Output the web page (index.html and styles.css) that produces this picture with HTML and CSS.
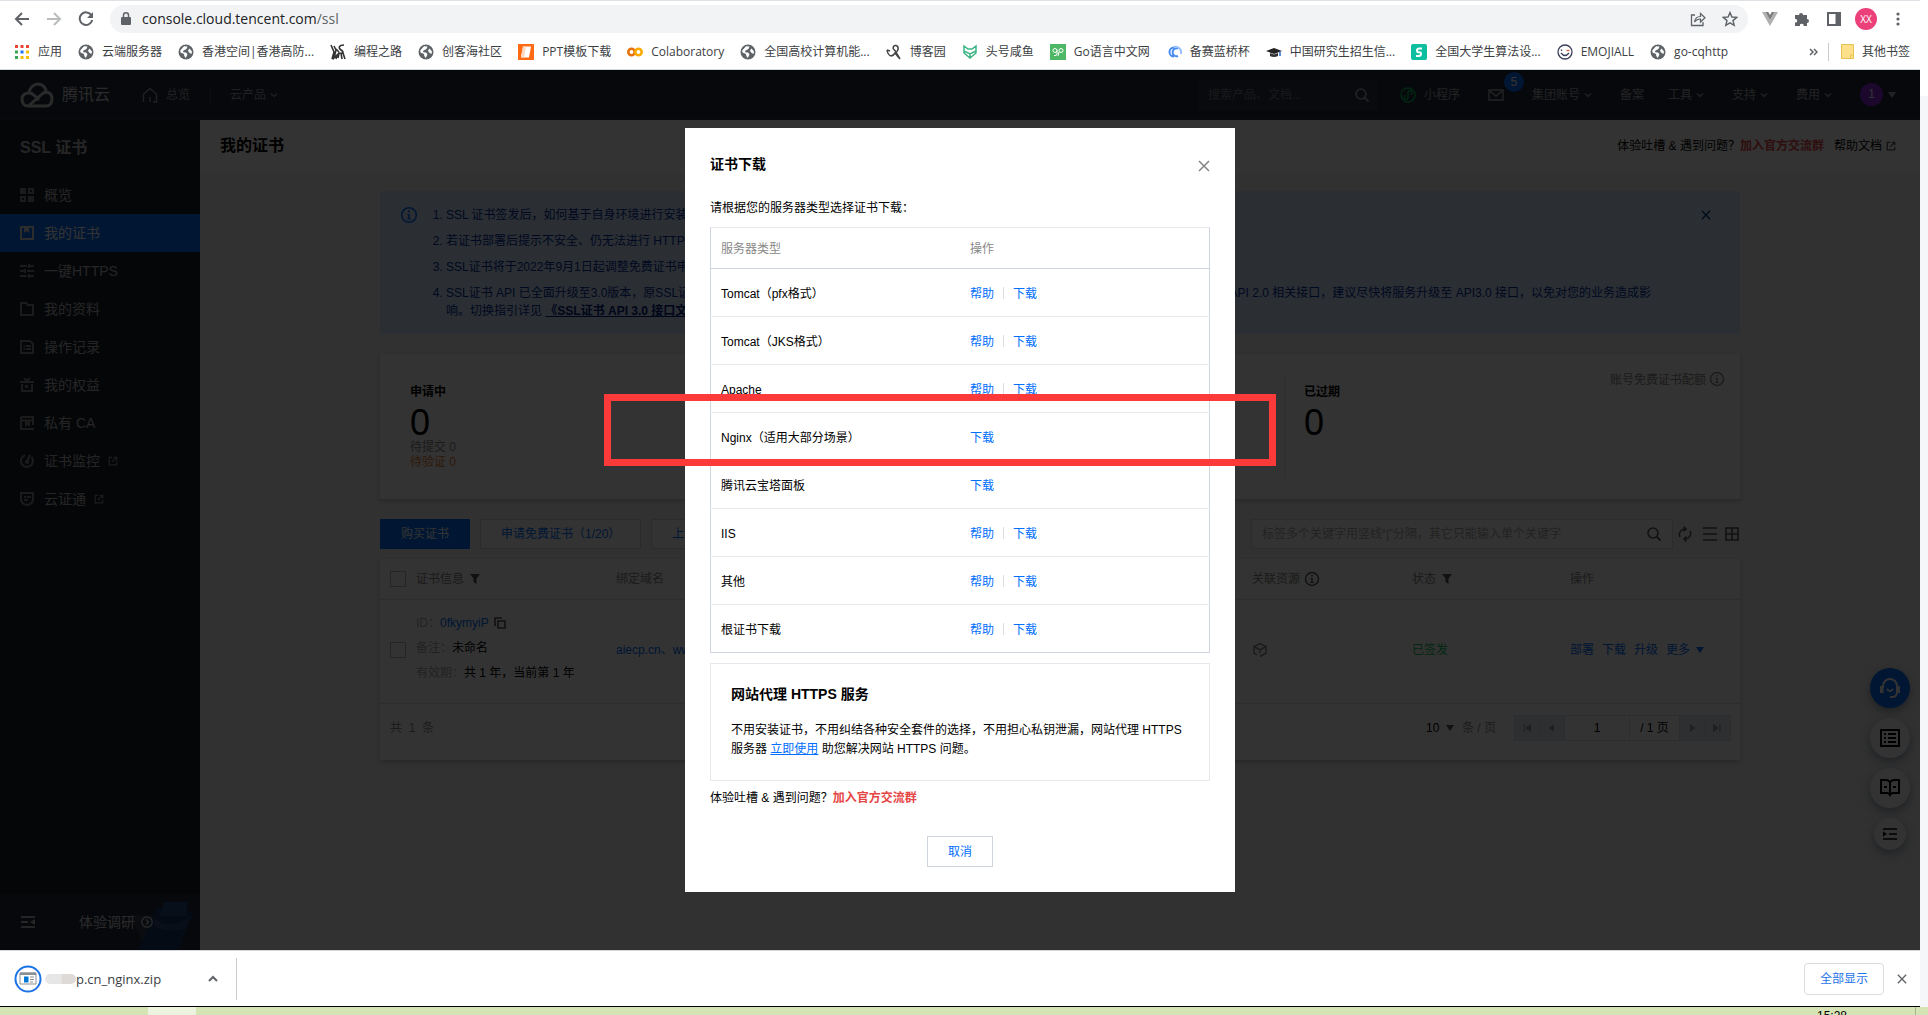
FILE: index.html
```html
<!DOCTYPE html>
<html lang="zh-CN">
<head>
<meta charset="utf-8">
<title>我的证书 - SSL 证书</title>
<link rel="stylesheet" href="styles.css">
</head>
<body>
<svg class="sprite" aria-hidden="true">
  <symbol id="globe" viewBox="0 0 16 16"><circle cx="8" cy="8" r="7.5" fill="#5f6368"/><path d="M6 2.2 9.500 2.400 8.500 5 5.500 6.500 5 8.200 8 8.600 9.500 10.300 7.800 14 6.300 12 6 10 2.500 8.500 2.200 6.500z" fill="#fff"/><path d="M11.500 4.500 14 7.500 13.500 10 11 8.500 10 6.500z" fill="#fff"/></symbol>
  <symbol id="chev" viewBox="0 0 8 8"><path d="M1 2.500 4 5.500 7 2.500" fill="none" stroke="currentColor" stroke-width="1.200"/></symbol>
  <symbol id="ext" viewBox="0 0 12 12"><path d="M5 1.500H1.500V10.500H10.500V7M7 1.500H10.500V5M10.500 1.500 5 7" fill="none" stroke="currentColor" stroke-width="1.500"/></symbol>
  <symbol id="info" viewBox="0 0 16 16"><circle cx="8" cy="8" r="6.500" fill="none" stroke="currentColor" stroke-width="1.400"/><path d="M7.200 4h1.600v1.600H7.200zM6.500 7h2.200v4h1v1H6.300v-1h1V8h-.8z" fill="currentColor"/></symbol>
  <symbol id="search" viewBox="0 0 16 16"><circle cx="7" cy="7" r="5" fill="none" stroke="currentColor" stroke-width="1.600"/><path d="M10.700 10.700 14.500 14.500" stroke="currentColor" stroke-width="1.800"/></symbol>
  <symbol id="filter" viewBox="0 0 10 10"><path d="M0 0H10L6.500 4.500V10L3.500 8V4.500z" fill="currentColor"/></symbol>
  <symbol id="close" viewBox="0 0 12 12"><path d="M1 1 11 11M11 1 1 11" stroke="currentColor" stroke-width="1.600"/></symbol>
  <symbol id="caret" viewBox="0 0 8 6"><path d="M0 0H8L4 6z" fill="currentColor"/></symbol>
</svg>

<div class="screen">
  <div class="browser">
    <header class="toolbar">
      <button class="tool" aria-label="后退"><svg width="16" height="16" viewBox="0 0 16 16"><path d="M15 8H2.500M8 2 2 8l6 6" fill="none" stroke="#5f6368" stroke-width="2"/></svg></button>
      <button class="tool" aria-label="前进"><svg width="16" height="16" viewBox="0 0 16 16"><path d="M1 8H13.500M8 2l6 6-6 6" fill="none" stroke="#babcbe" stroke-width="2"/></svg></button>
      <button class="tool" aria-label="刷新"><svg width="16" height="16" viewBox="0 0 16 16"><path d="M13.500 4.500A6.300 6.300 0 1 0 14.200 9" fill="none" stroke="#5f6368" stroke-width="2"/><path d="M15 1V7H9z" fill="#5f6368"/></svg></button>
      <div class="omnibox">
        <svg width="10" height="13" viewBox="0 0 10 13"><rect y="5" width="10" height="8" rx="1" fill="#5f6368"/><path d="M2.500 5V3.300a2.500 2.500 0 0 1 5 0V5" fill="none" stroke="#5f6368" stroke-width="1.500"/></svg>
        <span class="url">console.cloud.tencent.com<span class="path">/ssl</span></span>
        <svg width="16" height="16" viewBox="0 0 16 16"><path d="M5 4H1.500V14.500H13V11" fill="none" stroke="#5f6368" stroke-width="1.300"/><path d="M4.500 11C5 7.500 7 5.500 10.500 5.500V2.500L15 6.700 10.500 11V8C8 8 6 9 4.500 11z" fill="none" stroke="#5f6368" stroke-width="1.200"/></svg>
        <svg width="16" height="16" viewBox="0 0 16 16"><path d="M8 1.500 9.900 6 14.700 6.400 11 9.600 12.200 14.300 8 11.800 3.800 14.300 5 9.600 1.300 6.400 6.100 6z" fill="none" stroke="#5f6368" stroke-width="1.400"/></svg>
      </div>
      <div class="extensions">
        <svg width="16" height="16" viewBox="0 0 16 16"><path d="M0 1H3.500L8 9 12.500 1H16L8 15z" fill="#b0b0b0"/><path d="M3.500 1H6.300L8 4 9.700 1H12.500L8 9z" fill="#7d7d7d"/></svg>
        <svg width="16" height="16" viewBox="0 0 16 16"><path d="M1 4H5a2 2 0 1 1 4 0H13V8a2 2 0 1 1 0 4V15H9.500a1.800 1.800 0 1 0-3.500 0H1V11.500a1.800 1.800 0 1 0 0-3.500z" fill="#5f6368"/></svg>
        <svg width="16" height="16" viewBox="0 0 16 16"><path d="M2 2H14V14H2z" fill="none" stroke="#5f6368" stroke-width="2"/><path d="M9.500 2H14V14H9.500z" fill="#5f6368"/></svg>
        <span class="profile">XX</span>
        <svg width="16" height="16" viewBox="0 0 16 16" fill="#5f6368"><circle cx="8" cy="3" r="1.600"/><circle cx="8" cy="8" r="1.600"/><circle cx="8" cy="13" r="1.600"/></svg>
      </div>
    </header>

    <nav class="bookmarks">
      <a href="#"><svg width="16" height="16" viewBox="0 0 16 16"><path d="M1 1h3v3H1zM6.500 1h3v3h-3zM12 1h3v3h-3z" fill="#ea4335"/><path d="M1 6.500h3v3H1z" fill="#34a853"/><path d="M6.500 6.500h3v3h-3z" fill="#1a73e8"/><path d="M12 6.500h3v3h-3zM6.500 12h3v3h-3zM12 12h3v3h-3z" fill="#fbbc04"/><path d="M1 12h3v3H1z" fill="#34a853"/></svg>应用</a>
      <a href="#"><svg width="16" height="16"><use href="#globe"/></svg>云端服务器</a>
      <a href="#"><svg width="16" height="16"><use href="#globe"/></svg>香港空间|香港高防...</a>
      <a href="#"><svg width="16" height="16" viewBox="0 0 16 16"><path d="M1 1 4 8 2 15M4 2 6 6 4 14 7 11 6 15M14 1C9 1 8 4 11 6S14 10 9 9L8 14M12 6 15 15M11 9 12 15M6 5 9 8" fill="none" stroke="#333" stroke-width="1.600"/></svg>编程之路</a>
      <a href="#"><svg width="16" height="16"><use href="#globe"/></svg>创客海社区</a>
      <a href="#"><svg width="16" height="16" viewBox="0 0 16 16"><path d="M0 0H16V16H0z" fill="#ff6a13"/><path d="M5 2.500H13L11 13.500H3z" fill="#fff"/><path d="M8 2.500 6 13.500H3L5 2.500z" fill="#ffd9c2"/></svg>PPT模板下载</a>
      <a href="#"><svg width="16" height="16" viewBox="0 0 16 16" fill="none" stroke-width="2.600"><circle cx="4.500" cy="8" r="3.200" stroke="#e8710a"/><circle cx="11.500" cy="8" r="3.200" stroke="#f9ab00"/></svg>Colaboratory</a>
      <a href="#"><svg width="16" height="16"><use href="#globe"/></svg>全国高校计算机能...</a>
      <a href="#"><svg width="16" height="16" viewBox="0 0 16 16"><path d="M1 6C2 12 6 14 9 9L13 14M9 9C13 7 13 2 10 1.500S6 5 9 6.500L14 15M1 6 4 7" fill="none" stroke="#444" stroke-width="1.500"/></svg>博客园</a>
      <a href="#"><svg width="16" height="16" viewBox="0 0 16 16"><path d="M2 2 6 5H10L14 2V9L8 14 2 9z M2 7 8 10 14 7 M8 10V14" fill="none" stroke="#3cb585" stroke-width="1.500"/></svg>头号咸鱼</a>
      <a href="#"><svg width="16" height="16" viewBox="0 0 16 16"><path d="M0 0H16V16H0z" fill="#4eb866"/><circle cx="5" cy="6.500" r="2" fill="none" stroke="#fff"/><circle cx="11" cy="6.500" r="2" fill="none" stroke="#fff"/><path d="M7 6V10Q7 12 4 11.500M9 8 8 12" fill="none" stroke="#fff"/></svg>Go语言中文网</a>
      <a href="#"><svg width="16" height="16" viewBox="0 0 16 16" fill="none" stroke="#4a8df0" stroke-width="2"><path d="M8 3.500A4.500 4.500 0 1 0 8 12.500M12 4.500A4 4 0 1 0 12 12"/><path d="M8 3A5.500 5.500 0 0 1 14.800 10" stroke="#9ac2fa"/></svg>备赛蓝桥杯</a>
      <a href="#"><svg width="16" height="16" viewBox="0 0 16 16"><path d="M0 7 8 4 16 7 8 10z" fill="#222"/><path d="M4 9V12Q8 14 12 12V9L8 10.500z" fill="#333"/><path d="M14 7.500V12" stroke="#2a6ad0" stroke-width="1.500"/></svg>中国研究生招生信...</a>
      <a href="#"><svg width="16" height="16" viewBox="0 0 16 16"><rect width="16" height="16" rx="2" fill="#0bbfa0"/><path d="M11 4.500H8.500Q6 4.500 6 6.500T8 8.300 10 10 7.500 12H5" fill="none" stroke="#fff" stroke-width="2"/></svg>全国大学生算法设...</a>
      <a href="#"><svg width="16" height="16" viewBox="0 0 16 16" fill="none" stroke="#3b3f5c" stroke-width="1.300"><circle cx="8" cy="8" r="7"/><path d="M4 9Q8 14 12 9M4.500 5.500V7"/><path d="M9.500 6.500H12.500" stroke="#e85b3b"/></svg>EMOJIALL</a>
      <a href="#"><svg width="16" height="16"><use href="#globe"/></svg>go-cqhttp</a>
      <button class="more" aria-label="更多书签"><svg width="9" height="8" viewBox="0 0 9 8"><path d="M1 1 4 4 1 7M5 1 8 4 5 7" fill="none" stroke="#5f6368" stroke-width="1.500"/></svg></button>
      <a class="others" href="#"><svg width="13" height="15" viewBox="0 0 13 15"><path d="M.5 .5H12.500V14.500H.5z" fill="#ffe08a" stroke="#e8c250"/><path d="M9.500 14.500V11H12.500" fill="none" stroke="#e8c250"/></svg>其他书签</a>
    </nav>

    <div class="page">
      <header class="topnav">
        <svg class="logo" width="34" height="26" viewBox="0 0 34 26"><path d="M9 11C10 5 14 2 18 2c5 0 8 4 8 8M26 10c4 0 6 3 6 7 0 5-3 7-6 7H8c-4 0-6-3-6-7s3-6 7-6c4 0 6 3 10 7M9 23.500 22 12c2-2 4-2 6-1" fill="none" stroke="currentColor" stroke-width="3"/></svg>
        <span class="brand">腾讯云</span>
        <a class="home" href="#"><svg width="16" height="16" viewBox="0 0 16 16"><path d="M1.500 15V7L8 1.500 14.500 7V15H11M8 15V10" fill="none" stroke="currentColor" stroke-width="1.400"/></svg>总览</a>
        <a class="products" href="#">云产品<svg width="8" height="8"><use href="#chev"/></svg></a>
        <label class="topsearch"><input type="text" placeholder="搜索产品、文档..." aria-label="搜索"><svg width="16" height="16"><use href="#search"/></svg></label>
        <a class="mini" href="#"><svg width="16" height="16" viewBox="0 0 16 16" fill="none" stroke="#00c060" stroke-width="1.400"><circle cx="8" cy="8" r="7"/><path d="M8 11V5.500a2 2 0 1 1 2.500 2M8 5V10.500a2 2 0 1 1-2.500-2"/></svg>小程序</a>
        <a class="mail" href="#" aria-label="消息"><svg width="16" height="12" viewBox="0 0 16 12"><path d="M1 1H15V11H1zM1 1.500 8 7 15 1.500" fill="none" stroke="currentColor" stroke-width="1.400"/></svg><span class="badge">5</span></a>
        <a class="group" href="#">集团账号<svg width="8" height="8"><use href="#chev"/></svg></a>
        <a class="beian" href="#">备案</a>
        <a class="drop" href="#">工具<svg width="8" height="8"><use href="#chev"/></svg></a>
        <a class="drop" href="#">支持<svg width="8" height="8"><use href="#chev"/></svg></a>
        <a class="drop" href="#">费用<svg width="8" height="8"><use href="#chev"/></svg></a>
        <a class="account" href="#"><span class="avatar">1</span><svg width="8" height="6"><use href="#caret"/></svg></a>
      </header>

      <div class="body">
        <aside class="sidebar">
          <h2>SSL 证书</h2>
          <nav class="menu">
            <a href="#"><svg width="14" height="14" viewBox="0 0 14 14" fill="currentColor"><path d="M0 0H6V6H0zM8 8H14V14H8z"/><path d="M9 1H13V5H9zM1 9H5V13H1z" fill="none" stroke="currentColor" stroke-width="2"/></svg>概览</a>
            <a class="active" href="#"><svg width="14" height="14" viewBox="0 0 14 14"><path d="M1 1H13V13H1z" fill="none" stroke="currentColor" stroke-width="2"/><path d="M4 1H9V7L6.500 5 4 7z" fill="currentColor"/></svg>我的证书</a>
            <a href="#"><svg width="14" height="14" viewBox="0 0 14 14"><path d="M0 2H7M9 0V4M9 2H14M0 7H4M5 5V9M7 7H14M0 12H7M9 10V14M9 12H14" fill="none" stroke="currentColor" stroke-width="2"/></svg>一键HTTPS</a>
            <a href="#"><svg width="14" height="14" viewBox="0 0 14 14"><path d="M1 1H6L8 3H13V13H1z" fill="none" stroke="currentColor" stroke-width="2"/></svg>我的资料</a>
            <a href="#"><svg width="14" height="14" viewBox="0 0 14 14"><path d="M1 1H10L13 4V13H1z" fill="none" stroke="currentColor" stroke-width="2"/><path d="M3.500 6H5M6 6H11M3.500 9H5M6 9H11" stroke="currentColor" stroke-width="2"/></svg>操作记录</a>
            <a href="#"><svg width="14" height="14" viewBox="0 0 14 14"><path d="M0 4H14M2 6V13H12V6M4 0 7 3 10 0" fill="none" stroke="currentColor" stroke-width="2"/><path d="M5 7H8V10H5z" fill="currentColor"/></svg>我的权益</a>
            <a href="#"><svg width="14" height="14" viewBox="0 0 14 14"><path d="M1 1H13V9M1 1V13H14M1 4.500H13" fill="none" stroke="currentColor" stroke-width="2"/><path d="M5 5H10V11L7.500 9 5 11z" fill="currentColor"/></svg>私有 CA</a>
            <a href="#"><svg width="14" height="14" viewBox="0 0 14 14"><path d="M5 1.200A6 6 0 1 0 11.500 3M10 1 7 8" fill="none" stroke="currentColor" stroke-width="2"/><circle cx="7" cy="8" r="2" fill="currentColor"/></svg>证书监控<svg class="out" width="10" height="10"><use href="#ext"/></svg></a>
            <a href="#"><svg width="14" height="14" viewBox="0 0 14 14"><path d="M1 1H13V7Q13 12 7 13 1 12 1 7z" fill="none" stroke="currentColor" stroke-width="2"/><path d="M4 4H6V6H4zM7 4H11V6H7zM4 7H8V9H4z" fill="currentColor"/></svg>云证通<svg class="out" width="10" height="10"><use href="#ext"/></svg></a>
          </nav>
          <div class="survey">
            <button aria-label="收起菜单"><svg width="14" height="12" viewBox="0 0 14 12"><path d="M0 1H14M0 6H7M0 11H14" stroke="currentColor" stroke-width="2"/><path d="M14 3V9L9 6z" fill="currentColor"/></svg></button>
            <a href="#">体验调研<svg width="12" height="12" viewBox="0 0 12 12" fill="none" stroke="currentColor" stroke-width="1.300"><circle cx="6" cy="6" r="5.200"/><path d="M5 3.500 7.500 6 5 8.500"/></svg></a>
            <svg class="art" width="90" height="48" viewBox="0 0 90 48"><path d="M24 12 48 14 36 40 30 26z" fill="#3a3f4c"/><path d="M50 6 88 10 72 48H32z" fill="#1d3a66"/><path d="M58 0H82L80 14H54z" fill="#264a80"/><path d="M48 16Q64 30 84 14L80 26Q64 32 48 24z" fill="#2a4a78"/></svg>
          </div>
        </aside>

        <main class="content">
          <div class="titlebar">
            <h1>我的证书</h1>
            <span>体验吐槽 &amp; 遇到问题？<a class="join" href="#">加入官方交流群</a></span>
            <a class="docs" href="#">帮助文档<svg width="10" height="10"><use href="#ext"/></svg></a>
          </div>
          <div class="inner">
            <section class="alert">
              <svg width="18" height="18"><use href="#info"/></svg>
              <ol>
                <li>SSL 证书签发后，如何基于自身环境进行安装</li>
                <li>若证书部署后提示不安全、仍无法进行 HTTP</li>
                <li>SSL证书将于2022年9月1日起调整免费证书申</li>
                <li><div class="split"><span>SSL证书 API 已全面升级至3.0版本，原SSL证</span><span>API 2.0 相关接口，建议尽快将服务升级至 API3.0 接口，以免对您的业务造成影</span></div>响。切换指引详见 <a href="#">《SSL证书 API 3.0 接口文</a></li>
              </ol>
              <button aria-label="关闭提示"><svg width="10" height="10"><use href="#close"/></svg></button>
            </section>

            <section class="stats">
              <div class="stat"><h3>申请中</h3><b>0</b><span class="muted">待提交 0</span><span class="warn">待验证 0</span></div>
              <div class="stat last"><h3>已过期</h3><b>0</b></div>
              <span class="quota">账号免费证书配额<svg width="16" height="16"><use href="#info"/></svg></span>
            </section>

            <div class="actions">
              <button class="primary">购买证书</button>
              <button class="plain">申请免费证书（1/20）</button>
              <button class="plain">上传证书</button>
              <label class="find"><input type="text" placeholder="标签多个关键字用竖线“|”分隔，其它只能输入单个关键字" aria-label="搜索证书"><svg width="16" height="16"><use href="#search"/></svg></label>
              <button class="icon" aria-label="刷新列表"><svg width="14" height="16" viewBox="0 0 14 16"><path d="M2 11A5.500 5.500 0 0 1 7 3M5.500 .5 8 3 5.500 5.500M12 5A5.500 5.500 0 0 1 7 13M8.500 10.500 6 13 8.500 15.500" fill="none" stroke="currentColor" stroke-width="1.500"/></svg></button>
              <button class="icon" aria-label="列表视图"><svg width="14" height="14" viewBox="0 0 14 14"><path d="M0 1H14M0 7H14M0 13H14" stroke="currentColor" stroke-width="1.600"/></svg></button>
              <button class="icon" aria-label="卡片视图"><svg width="14" height="14" viewBox="0 0 14 14"><path d="M1 1H13V13H1zM7 1V13M1 7H13" fill="none" stroke="currentColor" stroke-width="1.600"/></svg></button>
            </div>

            <section class="list">
              <table>
                <colgroup><col class="c1"><col class="c2"><col><col class="c4"><col class="c5"><col class="c6"></colgroup>
                <thead><tr>
                  <th class="tick"><input type="checkbox" aria-label="全选"></th>
                  <th>证书信息<svg class="f" width="10" height="10"><use href="#filter"/></svg></th>
                  <th>绑定域名</th>
                  <th>关联资源<svg class="i" width="16" height="16"><use href="#info"/></svg></th>
                  <th>状态<svg class="f" width="10" height="10"><use href="#filter"/></svg></th>
                  <th>操作</th>
                </tr></thead>
                <tbody><tr>
                  <td class="tick"><input type="checkbox" aria-label="选择证书"></td>
                  <td class="info"><p><span>ID：</span><a href="#">0fkymyiP</a><svg width="12" height="12" viewBox="0 0 12 12"><path d="M1 9V1H8M4 4H11V11H4z" fill="none" stroke="currentColor" stroke-width="1.600"/></svg></p><p><span>备注：</span>未命名</p><p><span>有效期：</span>共 1 年，当前第 1 年</p></td>
                  <td><a href="#">aiecp.cn、www</a></td>
                  <td><svg class="cube" width="16" height="16" viewBox="0 0 16 16"><path d="M5 13 2 11V4.500L8 1.500 14 4.500V11L8 14.500M2 4.500 8 8 14 4.500M8 8V11" fill="none" stroke="currentColor" stroke-width="1.500"/></svg></td>
                  <td class="ok">已签发</td>
                  <td><div class="ops"><a href="#">部署</a><a href="#">下载</a><a href="#">升级</a><a href="#">更多<svg width="8" height="6"><use href="#caret"/></svg></a></div></td>
                </tr></tbody>
              </table>
              <footer class="pager">
                <span class="total">共&nbsp; 1 &nbsp;条</span>
                <span class="size"><select aria-label="每页条数"><option>10</option></select><svg width="8" height="6"><use href="#caret"/></svg></span>
                <span class="unit">条 / 页</span>
                <div class="pages">
                  <button aria-label="第一页"><svg width="8" height="8" viewBox="0 0 8 8"><path d="M1 0V8" stroke="currentColor"/><path d="M8 0V8L2 4z" fill="currentColor"/></svg></button>
                  <button aria-label="上一页"><svg width="8" height="8" viewBox="0 0 8 8"><path d="M6 0V8L1 4z" fill="currentColor"/></svg></button>
                  <input type="text" value="1" aria-label="页码">
                  <span>/ 1 页</span>
                  <button aria-label="下一页"><svg width="8" height="8" viewBox="0 0 8 8"><path d="M2 0V8L7 4z" fill="currentColor"/></svg></button>
                  <button aria-label="最后一页"><svg width="8" height="8" viewBox="0 0 8 8"><path d="M7 0V8" stroke="currentColor"/><path d="M0 0V8L6 4z" fill="currentColor"/></svg></button>
                </div>
              </footer>
            </section>
          </div>
        </main>
      </div>

      <div class="float">
        <button class="chat" aria-label="在线客服"><svg width="22" height="22" viewBox="0 0 22 22"><path d="M4 11V9a7 7 0 0 1 14 0V15Q18 19 14 20H11" fill="none" stroke="currentColor" stroke-width="2"/><path d="M1 9H4.500V16H1zM17.500 9H21V16H17.500z" fill="currentColor"/><path d="M8 12Q11 16 14 12" fill="none" stroke="currentColor" stroke-width="2"/></svg></button>
        <button aria-label="反馈"><svg width="20" height="18" viewBox="0 0 20 18"><path d="M1 1H19V17H1z" fill="none" stroke="currentColor" stroke-width="2"/><path d="M4 5H6M8 5H16M4 9H6M8 9H16M4 13H6M8 13H16" stroke="currentColor" stroke-width="2"/></svg></button>
        <button aria-label="文档"><svg width="20" height="18" viewBox="0 0 20 18"><path d="M10 3Q8 1 6 1H1V14H7Q9 14 10 16 11 14 13 14H19V1H14Q12 1 10 3zM10 3V16M4 8H7M13 8H16" fill="none" stroke="currentColor" stroke-width="2"/></svg></button>
        <button class="small" aria-label="收起"><svg width="14" height="12" viewBox="0 0 14 12"><path d="M0 1H14M6 6H14M0 11H14" stroke="currentColor" stroke-width="1.600"/><path d="M0 3.500V8.500L4 6z" fill="currentColor"/></svg></button>
      </div>

      <div class="overlay">
        <div class="dialog" role="dialog" aria-labelledby="dlg-title">
          <div class="dialog-head"><h2 id="dlg-title">证书下载</h2><button aria-label="关闭"><svg width="12" height="12"><use href="#close"/></svg></button></div>
          <p class="hint">请根据您的服务器类型选择证书下载：</p>
          <table class="servers">
            <thead><tr><th>服务器类型</th><th>操作</th></tr></thead>
            <tbody>
              <tr><td>Tomcat（pfx格式）</td><td><a href="#">帮助</a><i></i><a href="#">下载</a></td></tr>
              <tr><td>Tomcat（JKS格式）</td><td><a href="#">帮助</a><i></i><a href="#">下载</a></td></tr>
              <tr><td>Apache</td><td><a href="#">帮助</a><i></i><a href="#">下载</a></td></tr>
              <tr><td>Nginx（适用大部分场景）</td><td class="marked"><a href="#">下载</a></td></tr>
              <tr><td>腾讯云宝塔面板</td><td><a href="#">下载</a></td></tr>
              <tr><td>IIS</td><td><a href="#">帮助</a><i></i><a href="#">下载</a></td></tr>
              <tr><td>其他</td><td><a href="#">帮助</a><i></i><a href="#">下载</a></td></tr>
              <tr><td>根证书下载</td><td><a href="#">帮助</a><i></i><a href="#">下载</a></td></tr>
            </tbody>
          </table>
          <section class="promo">
            <h3>网站代理 HTTPS 服务</h3>
            <p>不用安装证书，不用纠结各种安全套件的选择，不用担心私钥泄漏，网站代理 HTTPS 服务器 <a href="#">立即使用</a> 助您解决网站 HTTPS 问题。</p>
          </section>
          <p class="feedback">体验吐槽 &amp; 遇到问题？<a class="join" href="#">加入官方交流群</a></p>
          <button class="cancel">取消</button>
        </div>
      </div>
    </div>

    <footer class="downloads">
      <svg width="28" height="28" viewBox="0 0 28 28"><circle cx="14" cy="14" r="12.500" fill="none" stroke="#1a73e8" stroke-width="2"/><path d="M6 8H22V19H6z" fill="#fff" stroke="#8a8f94"/><path d="M6 7.500H22V10H6z" fill="#8a8f94"/><path d="M10 11.500H14.500V17.500H10z" fill="#0078d7"/><path d="M16 12H20M16 14.500H20M16 17H19" stroke="#8a8f94"/></svg>
      <span class="file"><span class="smudge"></span>p.cn_nginx.zip</span>
      <button class="up" aria-label="下载选项"><svg width="10" height="7" viewBox="0 0 10 7"><path d="M1 6 5 2 9 6" fill="none" stroke="#5f6368" stroke-width="2"/></svg></button>
      <button class="show-all">全部显示</button>
      <button class="dismiss" aria-label="关闭下载栏"><svg width="10" height="10"><use href="#close"/></svg></button>
    </footer>
  </div>
  <div class="edge"></div>
</div>
<div class="taskbar"><span class="task"></span><time>15:28</time><span class="peek"></span></div>
</body>
</html>
```

FILE: styles.css
```css
* { box-sizing: border-box; }
body, h1, h2, h3, p, ol { margin: 0; }
body {
  display: flex; flex-direction: column; height: 100vh; overflow: hidden;
  font: 12px/18px "Liberation Sans", "Noto Sans CJK SC", sans-serif; color: #000; background: #fff;
}
a { color: #006eff; text-decoration: none; }
button, input, select { font: inherit; color: inherit; margin: 0; padding: 0; border: 0; background: none; border-radius: 0; }
button { display: flex; align-items: center; justify-content: center; }
svg { flex: none; display: block; }
.sprite { position: absolute; width: 0; height: 0; }

.screen { flex: 1; display: flex; min-height: 0; }
.browser { flex: 1; min-width: 0; display: flex; flex-direction: column; }
.edge { width: 8px; border-top: 96px solid #fff; background: #f5f6fa; }

/* browser chrome */
.toolbar {
  display: flex; align-items: center; gap: 16px; height: 34px; padding: 3px 14px 1px;
  border-top: 1px solid #dee1e6; background: #fff; font-family: "Open Sans", "Noto Sans CJK SC", sans-serif;
}
.omnibox { flex: 1; display: flex; align-items: center; gap: 16px; height: 28px; padding: 0 10px 0 11px; border-radius: 14px; background: #f1f3f4; }
.url { flex: 1; margin-left: -5px; font-size: 14px; color: #202124; }
.path { color: #5f6368; }
.extensions { display: flex; align-items: center; gap: 16px; margin-left: -2px; }
.profile { width: 22px; height: 22px; margin: 0 -3px; border-radius: 50%; background: #ec407a; color: #fff; font-size: 10px; line-height: 22px; text-align: center; }
.bookmarks {
  display: flex; align-items: center; gap: 16px; height: 36px; padding: 0 10px 0 14px; border-bottom: 1px solid #d5d8dc;
  background: #fff; font-family: "Open Sans", "Noto Sans CJK SC", sans-serif;
}
.bookmarks a { display: flex; align-items: center; gap: 8px; color: #3c4043; white-space: nowrap; }
.bookmarks .more { margin-left: auto; }
.bookmarks .others { margin-left: -6px; padding-left: 12px; border-left: 1px solid #c8cbd0; }

/* console page */
.page { position: relative; flex: 1; min-height: 0; display: flex; flex-direction: column; background: #f2f2f2; }
.topnav { display: flex; align-items: center; height: 50px; padding: 0 24px 0 20px; background: #262b3a; color: #a8abb0; border-bottom: 1px solid #303645; }
.topnav a { display: flex; align-items: center; gap: 4px; color: inherit; }
.logo, .brand { color: #d0d2d5; }
.brand { margin-left: 8px; font-size: 16px; }
.topnav .home { margin-left: 32px; gap: 8px; color: #9da0a6; }
.topnav .products { margin-left: 20px; padding-left: 19px; border-left: 1px solid #484d5a; color: #9da0a6; }
.topsearch { display: flex; align-items: center; width: 180px; height: 30px; margin-left: auto; padding: 0 8px 0 10px; background: #2b3345; }
.topsearch input { flex: 1; min-width: 0; }
.topsearch ::placeholder { color: #777b84; opacity: 1; }
.topnav .mini { margin-left: 22px; gap: 8px; }
.topnav .mail { position: relative; margin-left: 28px; }
.badge { position: absolute; left: 16px; top: -17px; width: 20px; height: 20px; border-radius: 50%; background: #006eff; line-height: 20px; text-align: center; color: #fff; }
.topnav .group { margin-left: 28px; }
.topnav .beian { margin-left: 28px; }
.topnav .drop { margin-left: 24px; }
.topnav .drop ~ .drop { margin-left: 28px; }
.topnav .account { margin-left: 28px; gap: 5px; }
.avatar { width: 23px; height: 23px; border-radius: 50%; background: #8a2be2; line-height: 23px; text-align: center; color: #fff; }

.body { flex: 1; min-height: 0; display: flex; }
.sidebar { width: 200px; display: flex; flex-direction: column; background: #1c222c; color: #b8babd; font-size: 14px; }
.sidebar h2 { padding: 17px 20px; font-size: 16px; line-height: 22px; }
.menu a { display: flex; align-items: center; gap: 10px; height: 38px; padding-left: 20px; color: inherit; }
.menu a svg { color: #85888e; }
.menu .out { margin-left: -2px; }
.menu .active { background: #006eff; color: #fff; }
.menu .active svg { color: #ddd; }
.survey { position: relative; isolation: isolate; display: flex; align-items: center; gap: 44px; height: 56px; margin-top: auto; padding-left: 21px; background: #262b3a; }
.survey a { display: flex; align-items: center; gap: 6px; color: #d0d2d5; }
.art { position: absolute; z-index: -1; right: 4px; bottom: 0; }

.content { flex: 1; min-width: 0; }
.titlebar { display: flex; align-items: center; height: 51px; padding: 0 24px 0 20px; background: #fff; }
.titlebar h1 { flex: 1; font-size: 16px; }
.join { color: #e54545; font-weight: bold; }
.docs { display: flex; align-items: center; gap: 4px; margin-left: 10px; color: #000; }
.docs svg { color: #555; }
.inner { max-width: 1400px; margin: 0 auto; padding: 20px; }

.alert { display: flex; align-items: flex-start; padding: 15px 29px 14px 20px; background: #d5e7ff; color: #0030a0; }
.alert svg { color: #006eff; }
.alert ol { flex: 1; padding-left: 28px; display: grid; gap: 8px; list-style-position: outside; }
.alert li { padding-right: 50px; }
.alert li a { color: #002080; font-weight: bold; text-decoration: underline; }
.alert button { margin-top: 4px; }
.alert button svg { color: #003b80; }
.split { display: flex; justify-content: space-between; }

.stats, .list { background: #fff; box-shadow: 0 2px 4px rgba(0, 0, 0, .2); }
.stats { display: grid; grid-template-columns: 904fr 300fr 156fr; height: 145px; margin-top: 20px; padding: 20px 0; }
.stat { display: flex; flex-direction: column; padding: 9px 30px; line-height: 15px; }
.stat h3 { font-size: 12px; line-height: 18px; }
.stat b { margin-top: 5px; font-size: 36px; line-height: 34px; font-weight: normal; }
.stat.last { padding-left: 19px; border-left: 1px solid #e5e5e5; }
.muted { color: #888; }
.warn { color: #ed7b2f; }
.quota { display: flex; justify-content: flex-end; align-self: start; gap: 3px; margin-right: 15px; margin-top: -3px; white-space: nowrap; color: #888; }

.actions { display: flex; align-items: center; gap: 10px; height: 30px; margin: 20px 0 10px; }
.actions button { height: 30px; }
.actions .primary { width: 90px; background: #006eff; color: #fff; }
.actions .plain { padding: 0 20px; border: 1px solid #cfd5de; background: #fff; color: #006eff; }
.find { display: flex; align-items: center; width: 422px; height: 30px; margin: 0 -5px 0 auto; padding: 0 10px; border: 1px solid #dcdcdc; background: #fff; color: #555; }
.find input { flex: 1; min-width: 0; }
.find ::placeholder { color: #aaa; opacity: 1; }
.icon { color: #555; }
.icon + .icon { margin-left: 1px; margin-right: -3px; }
.icon:last-child { margin-right: 1px; }

.list table { width: 100%; border-collapse: collapse; table-layout: fixed; }
.c1 { width: 26px; } .c2 { width: 200px; } .c4 { width: 160px; } .c5 { width: 158px; } .c6 { width: 180px; }
.list th, .list td { padding: 0 10px; text-align: left; font-weight: normal; border-bottom: 1px solid #dcdfe6; }
.list th { height: 40px; color: #888; }
.list td { height: 104px; padding-bottom: 2px; }
.list th svg { display: inline-block; vertical-align: middle; color: #555; }
.f { margin: -2px 0 0 6px; }
.i { margin: -2px 0 0 4px; }
.list .tick { padding-right: 0; }
.tick input { appearance: none; display: block; width: 16px; height: 16px; border: 1px solid #bbb; background: #fff; }
.list .info { padding-bottom: 6px; }
.info p { display: flex; align-items: center; line-height: 25px; white-space: nowrap; }
.info span { color: #aaa; }
.info svg { margin-left: 5px; color: #555; }
.cube { color: #888; }
.ok { color: #0abf5b; }
.ops { display: flex; gap: 8px; }
.ops a { display: flex; align-items: center; gap: 6px; }
.pager { display: flex; align-items: center; height: 56px; padding: 0 9px 8px 10px; color: #888; }
.total { flex: 1; }
.size { display: flex; align-items: center; gap: 6px; color: #000; }
.size select { appearance: none; }
.size svg { color: #555; }
.unit { margin: 0 18px 0 8px; }
.pages { display: grid; grid-template-columns: 25px 25px 65px 50px 25px 25px; height: 26px; border: 1px solid #dcdfe6; background: #fff; color: #000; text-align: center; line-height: 24px; }
.pages > * { border-right: 1px solid #dcdfe6; }
.pages input { min-width: 0; text-align: center; }
.pages button { background: #e3e8f0; color: #999; }

.float { position: absolute; right: 10px; bottom: 100px; display: flex; flex-direction: column; align-items: center; gap: 10px; }
.float button { width: 40px; height: 40px; border-radius: 50%; background: #fff; color: #000; box-shadow: 0 4px 10px rgba(30, 50, 90, .4); }
.float .chat { background: #006eff; color: #fff; }
.float .small { width: 32px; height: 32px; }

/* dialog */
.overlay { position: absolute; inset: 0; display: flex; align-items: center; justify-content: center; background: rgba(0, 0, 0, .8); }
.dialog { width: 550px; padding: 25px; background: #fff; }
.dialog-head { display: flex; align-items: center; justify-content: space-between; height: 22px; }
.dialog-head h2 { font-size: 14px; line-height: 22px; }
.dialog-head button { margin-top: 4px; color: #888; }
.hint { margin: 24px 0 10px; }
.servers { width: 100%; border: 1px solid #cfd5de; border-collapse: collapse; table-layout: fixed; }
.servers th, .servers td { padding: 2px 10px 0; text-align: left; font-weight: normal; border-top: 1px solid #e5e8ed; }
.servers th { height: 41px; color: #888; border-bottom: 1px solid #cfd5de; }
.servers td { height: 48px; }
.servers i { display: inline-block; width: 1px; height: 12px; margin: 0 9px; background: #ddd; vertical-align: -1px; }
.marked { position: relative; }
/* red frame that singles out the Nginx row */
.marked::after { content: ""; position: absolute; inset: -19px -67px -6px -356px; border: 7px solid #fc3a3a; pointer-events: none; }
.promo { margin: 10px 0 8px; padding: 20px; height: 118px; border: 1px solid #e5e8ed; }
.promo h3 { margin-bottom: 17px; font-size: 14px; line-height: 20px; }
.promo p { line-height: 19px; }
.promo a { text-decoration: underline; }
.servers td + td, .servers th + th { padding-left: 10px; }
.cancel { width: 66px; height: 31px; margin: 29px auto 0; border: 1px solid #cfd5de; color: #006eff; }

/* download shelf and taskbar */
.downloads { display: flex; align-items: center; height: 57px; padding: 0 13px 0 14px; border-top: 1px solid #d5d8dc; border-bottom: 1px solid #000; background: #fff; font-family: "Open Sans", "Noto Sans CJK SC", sans-serif; }
.file { display: flex; align-items: center; margin-left: 3px; font-size: 13px; color: #3c4043; }
.smudge { width: 31px; height: 10px; border-radius: 5px; background: linear-gradient(90deg, #e6e6e6 55%, #dedad7 55%); }
.up { height: 42px; margin-left: 47px; padding-right: 18px; border-right: 1px solid #c8cbd0; }
.show-all { width: 80px; height: 32px; margin-left: auto; border: 1px solid #dadce0; border-radius: 4px; color: #1a73e8; }
.dismiss { margin-left: 13px; color: #5f6368; }
.taskbar { display: flex; height: 8px; overflow: hidden; background: #d6e4b5; padding-right: 12px; }
.task { width: 48px; margin-left: 148px; background: #eef3e0; }
.taskbar time { margin: 3px 68px 0 auto; line-height: 12px; }
.peek { width: 1px; background: #a5b48a; }
```
